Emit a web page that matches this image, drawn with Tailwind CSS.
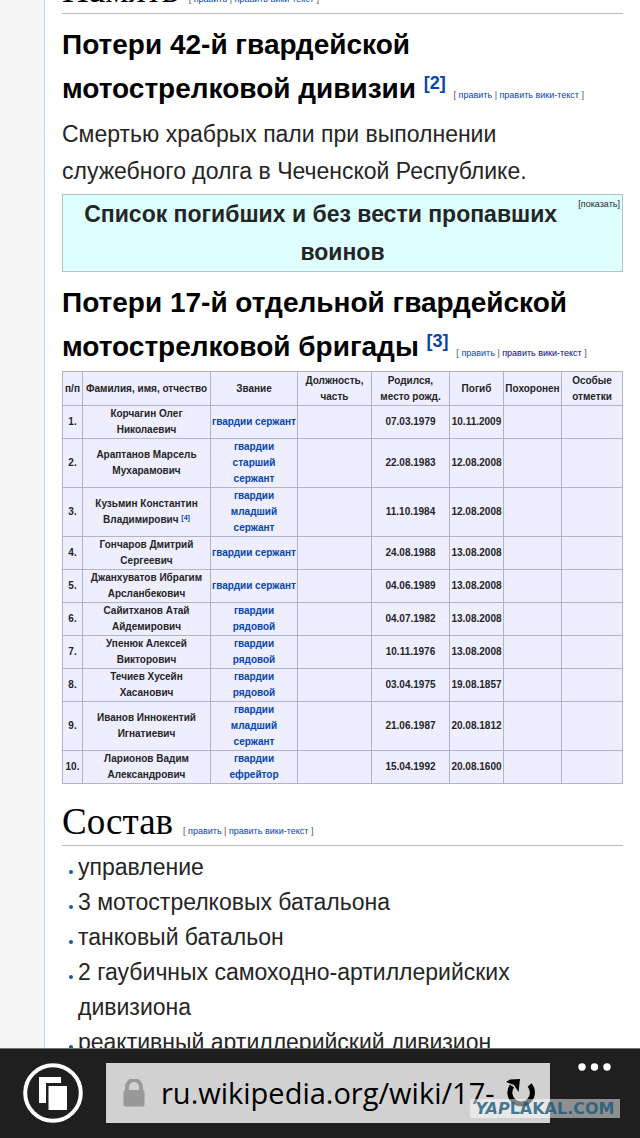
<!DOCTYPE html>
<html lang="ru">
  <head>
    <meta charset="UTF-8" />
    <meta name="viewport" content="width=device-width, initial-scale=1.0" />
    <title>Википедия</title>
    <script src="https://cdn.jsdelivr.net/npm/@tailwindcss/browser@4"></script>
  </head>

  <body class="h-screen flex flex-col overflow-hidden bg-[#f5f5f5] font-['Liberation_Sans',Arial,sans-serif] text-[#252525]">
    <main class="flex-1 min-h-0 overflow-hidden ml-11 pl-[17px] pr-[17px] bg-white border-l border-[#a7e0ee]">
      <h2 class="-mt-8 h-[46px] flex items-baseline gap-[10px] border-b border-[#bbb] font-['Liberation_Serif',Georgia,serif] text-[37px] leading-[44px] text-black">
        Память
        <span class="font-['Liberation_Sans',Arial,sans-serif] text-[9px] text-[#555]">[ <a href="#" class="text-[#0645ad]">править</a> | <a href="#" class="text-[#0645ad]">править вики-текст</a> ]</span>
      </h2>

      <h3 class="mt-[9px] h-[88px] text-[28px] leading-[44px] font-bold text-black">
        Потери 42-й гвардейской<br />мотострелковой дивизии
        <sup class="text-lg leading-none"><a href="#" class="text-[#0645ad]">[2]</a></sup>
        <span class="text-[9px] font-normal text-[#555]">[ <a href="#" class="text-[#0645ad]">править</a> | <a href="#" class="text-[#0645ad]">править вики-текст</a> ]</span>
      </h3>
      <p class="mt-[5px] text-[23px] leading-[37px]">Смертью храбрых пали при выполнении<br />служебного долга в Чеченской Республике.</p>

      <div class="mt-1 border border-[#b4c4c4] bg-[#dff] text-center text-[23px] leading-[38px] font-bold">
        <button type="button" class="float-right mt-[3px] mr-[2px] text-[9px] leading-3 font-normal">[показать]</button>
        Список погибших и без вести пропавших<br />воинов
      </div>

      <h3 class="mt-[9px] h-[88px] text-[28px] leading-[44px] font-bold text-black">
        Потери 17-й отдельной гвардейской<br />мотострелковой бригады
        <sup class="text-lg leading-none"><a href="#" class="text-[#0645ad]">[3]</a></sup>
        <span class="text-[9px] font-normal text-[#555]">[ <a href="#" class="text-[#0645ad]">править</a> | <a href="#" class="text-[#0b0080]">править вики-текст</a> ]</span>
      </h3>

      <table class="mt-[2px] w-full table-fixed border-collapse bg-[#eef] text-center text-[10px] leading-4 font-bold [&_th]:border [&_td]:border [&_th]:border-[#b3b3c3] [&_td]:border-[#b3b3c3] [&_th]:p-0 [&_td]:p-0 [&_a]:text-[#0645ad]">
        <colgroup>
          <col class="w-5" />
          <col class="w-32" />
          <col class="w-[87px]" />
          <col class="w-[74px]" />
          <col class="w-[78px]" />
          <col class="w-[54px]" />
          <col class="w-[58px]" />
          <col />
        </colgroup>
        <thead>
          <tr class="h-[34px]">
            <th>п/п</th>
            <th>Фамилия, имя, отчество</th>
            <th>Звание</th>
            <th>Должность,<br />часть</th>
            <th>Родился,<br />место рожд.</th>
            <th>Погиб</th>
            <th>Похоронен</th>
            <th>Особые<br />отметки</th>
          </tr>
        </thead>
        <tbody>
          <tr><td>1.</td><td>Корчагин Олег<br />Николаевич</td><td><a href="#">гвардии сержант</a></td><td></td><td>07.03.1979</td><td>10.11.2009</td><td></td><td></td></tr>
          <tr><td>2.</td><td>Араптанов Марсель<br />Мухарамович</td><td><a href="#">гвардии<br />старший<br />сержант</a></td><td></td><td>22.08.1983</td><td>12.08.2008</td><td></td><td></td></tr>
          <tr><td>3.</td><td>Кузьмин Константин<br />Владимирович <sup class="text-[7px] leading-none"><a href="#">[4]</a></sup></td><td><a href="#">гвардии<br />младший<br />сержант</a></td><td></td><td>11.10.1984</td><td>12.08.2008</td><td></td><td></td></tr>
          <tr><td>4.</td><td>Гончаров Дмитрий<br />Сергеевич</td><td><a href="#">гвардии сержант</a></td><td></td><td>24.08.1988</td><td>13.08.2008</td><td></td><td></td></tr>
          <tr><td>5.</td><td>Джанхуватов Ибрагим<br />Арсланбекович</td><td><a href="#">гвардии сержант</a></td><td></td><td>04.06.1989</td><td>13.08.2008</td><td></td><td></td></tr>
          <tr><td>6.</td><td>Сайитханов Атай<br />Айдемирович</td><td><a href="#">гвардии<br />рядовой</a></td><td></td><td>04.07.1982</td><td>13.08.2008</td><td></td><td></td></tr>
          <tr><td>7.</td><td>Упенюк Алексей<br />Викторович</td><td><a href="#">гвардии<br />рядовой</a></td><td></td><td>10.11.1976</td><td>13.08.2008</td><td></td><td></td></tr>
          <tr><td>8.</td><td>Течиев Хусейн<br />Хасанович</td><td><a href="#">гвардии<br />рядовой</a></td><td></td><td>03.04.1975</td><td>19.08.1857</td><td></td><td></td></tr>
          <tr><td>9.</td><td>Иванов Иннокентий<br />Игнатиевич</td><td><a href="#">гвардии<br />младший<br />сержант</a></td><td></td><td>21.06.1987</td><td>20.08.1812</td><td></td><td></td></tr>
          <tr><td>10.</td><td>Ларионов Вадим<br />Александрович</td><td><a href="#">гвардии<br />ефрейтор</a></td><td></td><td>15.04.1992</td><td>20.08.1600</td><td></td><td></td></tr>
        </tbody>
      </table>

      <h2 class="mt-4 h-[46px] flex items-baseline gap-[10px] border-b border-[#bbb] font-['Liberation_Serif',Georgia,serif] text-[37px] leading-[44px] text-black">
        Состав
        <span class="font-['Liberation_Sans',Arial,sans-serif] text-[9px] text-[#555]">[ <a href="#" class="text-[#0645ad]">править</a> | <a href="#" class="text-[#0645ad]">править вики-текст</a> ]</span>
      </h2>
      <ul class="mt-1 text-[23px] leading-[35px] [&>li]:flex [&>li]:gap-[5px] [&>li]:pl-[7px] [&>li]:before:mt-[20px] [&>li]:before:size-1 [&>li]:before:shrink-0 [&>li]:before:rounded-full [&>li]:before:bg-[#0f5f9f]">
        <li>управление</li>
        <li>3 мотострелковых батальона</li>
        <li>танковый батальон</li>
        <li>2 гаубичных самоходно-артиллерийских дивизиона</li>
        <li>реактивный артиллерийский дивизион</li>
      </ul>
    </main>

    <footer class="relative shrink-0 h-[90px] flex items-start bg-[#1f1f1f] border-t border-[#777]">
      <button type="button" aria-label="Вкладки" class="ml-[23px] mt-[14px]">
        <svg class="size-[60px]" viewBox="0 0 60 60">
          <circle cx="30" cy="30" r="27.8" fill="none" stroke="#fff" stroke-width="4" />
          <path d="M16 14h22v6H23v20H16z" fill="#fff" />
          <path d="M25.500 23H44v24H25.500z" fill="#fff" />
        </svg>
      </button>
      <form class="ml-[23px] mt-[14px] flex-1 min-w-0 h-[60px] flex items-center bg-[#d1d1d1] pl-[17px] pr-[14px]">
        <svg class="w-[22px] h-7 shrink-0" viewBox="0 0 22 28">
          <path d="M4 13V8a7 7 0 0 1 14 0v5" fill="none" stroke="#999" stroke-width="4" />
          <rect x="0.500" y="11" width="21" height="16.500" rx="2" fill="#999" />
        </svg>
        <input type="text" aria-label="Адрес" value="ru.wikipedia.org/wiki/17-" class="ml-4 flex-1 min-w-0 bg-transparent font-['Open_Sans','Noto_Sans',sans-serif] text-[29px] leading-10 text-black outline-none" />
        <button type="button" aria-label="Обновить">
          <svg class="w-[30px] h-[30px]" viewBox="0 0 30 30">
            <path d="M23.500 7A11.300 11.300 0 1 1 6 8" fill="none" stroke="#000" stroke-width="5" />
            <path d="M0 4L4 1.500L14 1L12.500 14L8 7Z" fill="#000" />
          </svg>
        </button>
      </form>
      <button type="button" aria-label="Ещё" class="ml-7 mr-[28px] mt-[14px]">
        <svg class="w-[34px] h-2" viewBox="0 0 34 8">
          <circle cx="4" cy="4" r="3.700" fill="#fff" />
          <circle cx="16.500" cy="4" r="3.700" fill="#fff" />
          <circle cx="29" cy="4" r="3.700" fill="#fff" />
        </svg>
      </button>
      <div class="absolute right-5 bottom-5 w-[150px] h-[19px] bg-white/50 text-center font-['DejaVu_Sans',sans-serif] text-base leading-[19px] font-bold text-[#17587a]/80"><i>YAP</i>LAKAL.COM</div>
    </footer>
  </body>
</html>
